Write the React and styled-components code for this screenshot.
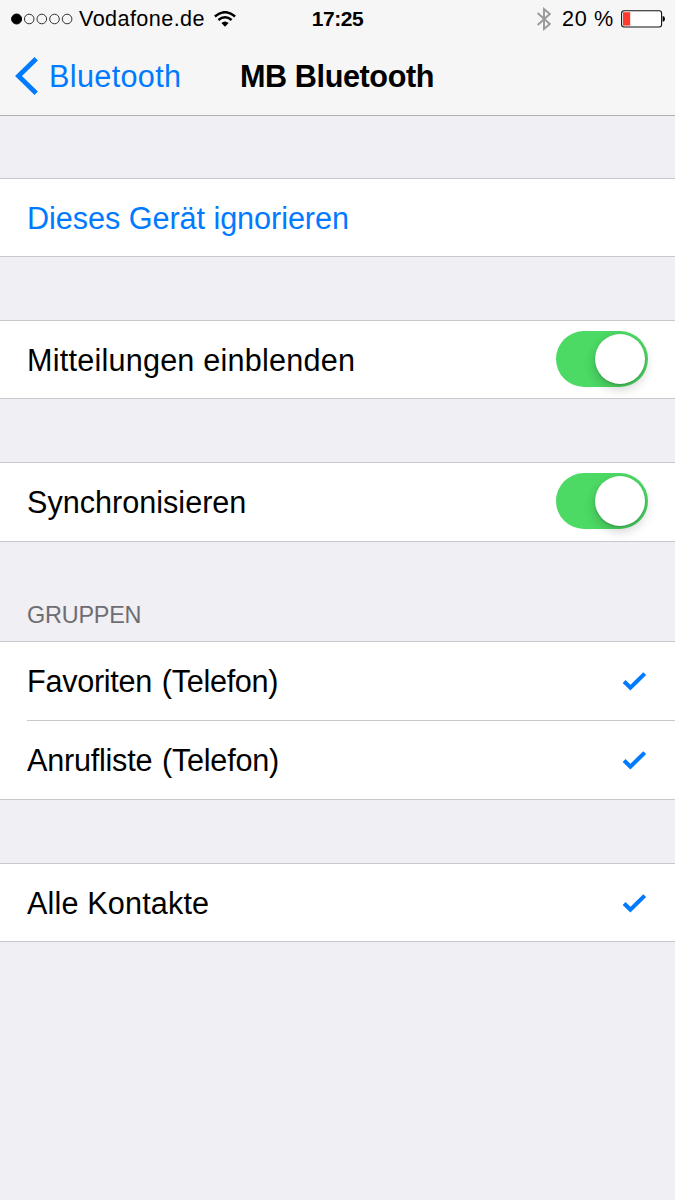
import React from "react";
import styled, { createGlobalStyle } from "styled-components";

const GlobalStyle = createGlobalStyle`
  *, *::before, *::after { box-sizing: border-box; }
  body {
    margin: 0;
    background: #efeff4;
    color: #000;
    font-family: "Liberation Sans", Arial, sans-serif;
  }
`;

const Screen = styled.div`
  width: 675px;
  height: 1200px;
  background: #efeff4;
  overflow: hidden;
`;

const Header = styled.header`
  height: 116px;
  background: #f6f6f6;
  border-bottom: 1px solid #b0b0b4;
`;

const StatusBar = styled.div`
  height: 37px;
  display: grid;
  grid-template-columns: 1fr auto 1fr;
  align-items: center;
  padding: 0 10px 0 11px;
  font-size: 21.6px;
  line-height: 37px;
`;

const StatusSide = styled.div`
  display: flex;
  align-items: center;
  justify-content: ${(p) => (p.$end ? "flex-end" : "flex-start")};
`;

const StatusText = styled.span`
  letter-spacing: ${(p) => p.$tracking || 0}px;
  margin: ${(p) => p.$margin || 0};
  white-space: nowrap;
`;

const Clock = styled.span`
  font-weight: 700;
  font-size: 21px;
  letter-spacing: -0.4px;
  padding-right: 1px;
`;

const NavBar = styled.nav`
  height: 78px;
  display: grid;
  grid-template-columns: 1fr auto 1fr;
  align-items: center;
  padding: 0 15px 0 14px;
  font-size: 30.6px;
`;

const BackButton = styled.div`
  display: flex;
  align-items: center;
  gap: 10px;
  letter-spacing: 0.35px;
  color: #007aff;
`;

const Title = styled.h1`
  margin: 0;
  font-size: 30.6px;
  font-weight: 700;
  letter-spacing: -0.4px;
`;

const Group = styled.section`
  margin-top: ${(p) => p.$gap}px;
  background: #fff;
  border-top: 1px solid #c8c7cc;
  border-bottom: 1px solid #c8c7cc;
`;

const GroupTitle = styled.h2`
  margin: 59px 0 0 27px;
  height: 40px;
  line-height: 29px;
  font-size: 23.4px;
  font-weight: 400;
  letter-spacing: -0.2px;
  color: #6d6d72;
`;

const Row = styled.div`
  height: ${(p) => p.$height || 77}px;
  margin-left: 27px;
  padding-right: 27px;
  display: flex;
  align-items: center;
  justify-content: space-between;
  border-bottom: ${(p) => (p.$divided ? "1px solid #c8c7cc" : "0")};
`;

const Label = styled.span`
  font-size: 30.6px;
  line-height: 36px;
  letter-spacing: ${(p) => p.$tracking || 0}px;
  word-spacing: ${(p) => p.$wordGap || 0}px;
  color: ${(p) => (p.$action ? "#007aff" : "#000")};
`;

const Toggle = styled.div`
  width: 92px;
  height: 56px;
  margin-bottom: 2px;
  padding: 3px;
  border-radius: 28px;
  background: #4cd964;
  display: flex;
  justify-content: flex-end;
`;

const Knob = styled.div`
  width: 50px;
  height: 50px;
  border-radius: 50%;
  background: #fff;
  box-shadow: 0 5px 12px rgba(0, 0, 0, 0.2), 0 1px 2px rgba(0, 0, 0, 0.18);
`;

const SignalDots = () => (
  <svg width="62" height="12" viewBox="0 0 62 12" fill="none" stroke="#333" strokeWidth="1">
    <circle cx="5.6" cy="6" r="5" fill="#000" stroke="#000" />
    <circle cx="18.2" cy="6" r="4.8" />
    <circle cx="30.8" cy="6" r="4.8" />
    <circle cx="43.5" cy="6" r="4.8" />
    <circle cx="56.1" cy="6" r="4.8" />
  </svg>
);

const WifiIcon = () => (
  <svg width="22" height="16" viewBox="0 0 22 16" fill="none" stroke="#000" strokeWidth="2.5">
    <path d="M0.9 5.5 Q11 -3.1 21.1 5.5" />
    <path d="M4.4 9 Q11 3.4 17.6 9" />
    <path d="M7.4 12 Q11 9 14.6 12 L11 15.7 Z" fill="#000" stroke="none" />
  </svg>
);

const BluetoothIcon = () => (
  <svg width="14" height="24" viewBox="0 0 14 24" fill="none" stroke="#999" strokeWidth="1.9">
    <path d="M0.6 6 L12.8 17 L7 22 V2 L12.8 7 L0.6 18" />
  </svg>
);

const BatteryIcon = () => (
  <svg width="44" height="18" viewBox="0 0 44 18">
    <rect x="0.6" y="0.8" width="40" height="16.2" rx="2.4" fill="#fff" stroke="#111" strokeWidth="1.1" />
    <rect x="2" y="2.2" width="7.2" height="13.4" fill="#ff3b30" />
    <path d="M41.6 6 Q44 6.3 44 8.9 Q44 11.5 41.6 11.8 Z" fill="#000" />
  </svg>
);

const BackChevron = () => (
  <svg width="25" height="38" viewBox="0 0 25 38" fill="none" stroke="#007aff" strokeWidth="4.8">
    <path d="M22.2 1.8 L4.5 19 L22.2 36.2" />
  </svg>
);

const Check = () => (
  <svg width="26" height="20" viewBox="0 0 26 20" fill="none" stroke="#007aff" strokeWidth="4.1">
    <path d="M2.1 10.6 L8.4 16.6 L22.7 2.6" />
  </svg>
);

export default function App() {
  return (
    <Screen>
      <GlobalStyle />
      <Header>
        <StatusBar>
          <StatusSide>
            <SignalDots />
            <StatusText $tracking={0.42} $margin="0 9px 0 6px">Vodafone.de</StatusText>
            <WifiIcon />
          </StatusSide>
          <Clock>17:25</Clock>
          <StatusSide $end>
            <BluetoothIcon />
            <StatusText $tracking={0.7} $margin="0 7px 0 11px">20 %</StatusText>
            <BatteryIcon />
          </StatusSide>
        </StatusBar>
        <NavBar>
          <BackButton>
            <BackChevron />
            <span>Bluetooth</span>
          </BackButton>
          <Title>MB Bluetooth</Title>
        </NavBar>
      </Header>
      <main>
        <Group $gap={62}>
          <Row>
            <Label $action $tracking={-0.05}>Dieses Gerät ignorieren</Label>
          </Row>
        </Group>
        <Group $gap={63}>
          <Row>
            <Label $tracking={0.22}>Mitteilungen einblenden</Label>
            <Toggle><Knob /></Toggle>
          </Row>
        </Group>
        <Group $gap={63}>
          <Row $height={78}>
            <Label>Synchronisieren</Label>
            <Toggle><Knob /></Toggle>
          </Row>
        </Group>
        <GroupTitle>GRUPPEN</GroupTitle>
        <Group $gap={0}>
          <Row $height={79} $divided>
            <Label $tracking={-0.28} $wordGap={1.5}>Favoriten (Telefon)</Label>
            <Check />
          </Row>
          <Row $height={78}>
            <Label $tracking={-0.23} $wordGap={1.5}>Anrufliste (Telefon)</Label>
            <Check />
          </Row>
        </Group>
        <Group $gap={63}>
          <Row>
            <Label $tracking={0.15}>Alle Kontakte</Label>
            <Check />
          </Row>
        </Group>
      </main>
    </Screen>
  );
}
